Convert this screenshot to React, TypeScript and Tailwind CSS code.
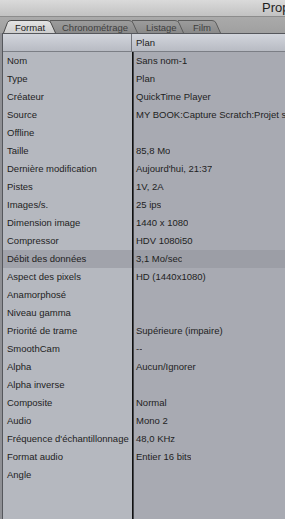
import React from 'react'

const rows: [string, string][] = [
  ['Nom', 'Sans nom-1'],
  ['Type', 'Plan'],
  ['Créateur', 'QuickTime Player'],
  ['Source', 'MY BOOK:Capture Scratch:Projet sans titre 1:Sans nom-1'],
  ['Offline', ''],
  ['Taille', '85,8 Mo'],
  ['Dernière modification', "Aujourd'hui, 21:37"],
  ['Pistes', '1V, 2A'],
  ['Images/s.', '25 ips'],
  ['Dimension image', '1440 x 1080'],
  ['Compressor', 'HDV 1080i50'],
  ['Débit des données', '3,1 Mo/sec'],
  ['Aspect des pixels', 'HD (1440x1080)'],
  ['Anamorphosé', ''],
  ['Niveau gamma', ''],
  ['Priorité de trame', 'Supérieure (impaire)'],
  ['SmoothCam', '--'],
  ['Alpha', 'Aucun/Ignorer'],
  ['Alpha inverse', ''],
  ['Composite', 'Normal'],
  ['Audio', 'Mono 2'],
  ["Fréquence d'échantillonnage", '48,0 KHz'],
  ['Format audio', 'Entier 16 bits'],
  ['Angle', ''],
]

type TabProps = { label: string; width: number; active?: boolean; z: string; pad: number; first?: boolean }

function Tab({ label, width, active, z, pad, first }: TabProps) {
  const w = width
  const h = 13
  const d = active
    ? `M0.5,${h} L4.5,2.5 Q5.5,0.5 8,0.5 L${w - 9},0.5 Q${w - 6},0.5 ${w - 5},3 L${w - 0.5},${h}`
    : `M0,${h} L0,0.5 L${w - 9},0.5 Q${w - 6},0.5 ${w - 5},3 L${w - 0.5},${h}`
  return (
    <div
      className={`relative h-[13px] shrink-0 ${z} ${first ? '' : '-ml-[6px]'}`}
      style={{ width: w }}
    >
      <svg className="absolute inset-0" width={w} height={h} viewBox={`0 0 ${w} ${h}`}>
        <defs>
          <linearGradient id={`g-${label}`} x1="0" y1="0" x2="0" y2="1">
            <stop offset="0" stopColor={active ? '#e4e4e4' : '#9c9c9c'} />
            <stop offset="1" stopColor={active ? '#cdcdcd' : '#8a8a8a'} />
          </linearGradient>
        </defs>
        <path d={d} fill={`url(#g-${label})`} stroke={active ? '#4a4a4a' : '#5c5c5c'} strokeWidth="1" />
      </svg>
      <span
        className={`relative block leading-[13px] pt-[1px] text-[9.5px] whitespace-nowrap ${
          active ? 'text-[#1c1c1c]' : 'text-[#3e3e3e]'
        }`}
        style={{ paddingLeft: pad }}
      >
        {label}
      </span>
    </div>
  )
}

export default function App() {
  return (
    <div className="w-[285px] h-[519px] overflow-hidden flex flex-col bg-[#a3a3a3] font-['Liberation_Sans',Arial,sans-serif]">
      {/* title bar */}
      <div className="h-[17px] shrink-0 bg-gradient-to-b from-[#dadada] to-[#c2c2c2] border-b border-[#8c8c8c] overflow-hidden">
        <div className="pl-[262px] text-[13px] leading-[16px] text-[#1e1e1e] whitespace-nowrap">Propriétés de l'élément</div>
      </div>

      {/* tabs */}
      <div className="h-[16px] shrink-0 flex items-end pl-[3px] bg-gradient-to-b from-[#aaaaaa] to-[#a0a0a0]">
        <Tab label="Format" width={53} active z="z-40" pad={12} first />
        <Tab label="Chronométrage" width={88} z="z-30" pad={12} />
        <Tab label="Listage" width={52} z="z-20" pad={14} />
        <Tab label="Film" width={43} z="z-10" pad={15} />
      </div>

      {/* table */}
      <div className="flex-1 flex flex-col pl-[2px] bg-[#8f9095] text-[#1e1e1e] text-[9.5px]">
        <div className="flex-1 flex flex-col border-l border-t border-[#55575c]">
          <div className="h-[18px] shrink-0 flex bg-gradient-to-b from-[#d2d5dc] to-[#b8bbc3] border-b border-[#7b7e85]">
            <div className="w-[129px] shrink-0 border-r border-[#73767d]" />
            <div className="pl-[4px] leading-[17px] text-[#222]">Plan</div>
          </div>
          <div className="flex-1 flex flex-col bg-[linear-gradient(to_right,#b5b8bf_129px,#111_129px,#111_130px,#45474c_130px,#45474c_131px,#a8aab2_131px)]">
            {rows.map(([k, v]) => (
              <div
                key={k}
                className={`h-[18px] shrink-0 flex items-center ${
                  k === 'Débit des données' ? 'bg-[linear-gradient(to_right,#a1a3ab_129px,#111_129px,#111_130px,#45474c_130px,#45474c_131px,#9c9ea6_131px)]' : ''
                }`}
              >
                <div className="w-[131px] shrink-0 pl-[4px] pr-[2px] whitespace-nowrap overflow-hidden">{k}</div>
                <div className="pl-[2px] whitespace-nowrap overflow-hidden">{v}</div>
              </div>
            ))}
          </div>
        </div>
      </div>
    </div>
  )
}
